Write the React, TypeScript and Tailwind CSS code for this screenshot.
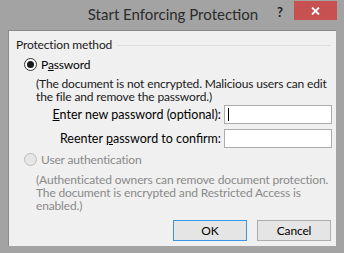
const font = { fontFamily: 'Lato, "Liberation Sans", sans-serif' };

const Radio = ({ checked, disabled }: { checked?: boolean; disabled?: boolean }) => (
  <div
    className={`w-[13px] h-[13px] rounded-full border flex items-center justify-center shrink-0 ${
      disabled ? 'border-[#bcbcbc] bg-[#e6e6e6]' : 'border-[#333333] bg-white'
    }`}
  >
    {checked && <div className="w-[7px] h-[7px] rounded-full bg-[#1a1a1a]" />}
  </div>
);

export default function App() {
  return (
    <div className="w-[344px] h-[253px] bg-[#a3a3a3] flex flex-col text-[#000000] whitespace-nowrap" style={font}>
      {/* title bar */}
      <div className="relative h-[30px] shrink-0 flex items-center justify-center">
        <span className="text-[15px] leading-[18px] text-[#2b2b2b] pl-[2px] pb-[3px]">Start Enforcing Protection</span>
        <span className="absolute left-[277px] top-[5px] text-[13px] leading-[15px] font-bold text-[#1e1e1e]">?</span>
        <div className="absolute left-[294px] top-[1px] w-[43px] h-[19px] bg-[#c75050] flex items-center justify-center">
          <svg width="9" height="8" viewBox="0 0 9 8">
            <path d="M1 0.5 L8 7.5 M8 0.5 L1 7.5" stroke="white" strokeWidth="1.8" />
          </svg>
        </div>
      </div>

      {/* client area */}
      <div className="ml-[8px] w-[328px] h-[216px] bg-[#f0f0f0] border-l border-t border-[#8a8a8a] text-[12px] leading-[13px] tracking-[-0.15px] flex flex-col">
        <div className="flex items-center mt-[7px] ml-[7px] mr-[5px]">
          <span className="text-[#1a1a1a]">Protection method</span>
          <div className="flex-1 h-px bg-[#dcdcdc] ml-[5px] mt-[1px]" />
        </div>

        <div className="flex items-center mt-[7px] ml-[15px]">
          <Radio checked />
          <span className="ml-[4px]">
            P<span className="underline">a</span>ssword
          </span>
        </div>

        <div className="ml-[27px] mt-[6px] text-[#1a1a1a]">
          <div>(The document is not encrypted. Malicious users can edit</div>
          <div>the file and remove the password.)</div>
        </div>

        <div className="flex flex-col gap-[5px] mt-[2px] mr-[4px] text-[12.5px] tracking-normal">
          <div className="flex items-center justify-end">
            <span className="mr-[3px]">
              <span className="underline">E</span>nter new password (optional):
            </span>
            <div className="w-[108px] h-[19px] bg-white border border-[#acacac] flex items-center pl-[3px]">
              <div className="w-px h-[13px] bg-black" />
            </div>
          </div>
          <div className="flex items-center justify-end">
            <span className="mr-[3px]">
              Reenter <span className="underline">p</span>assword to confirm:
            </span>
            <div className="w-[108px] h-[19px] bg-white border border-[#acacac]" />
          </div>
        </div>

        <div className="flex items-center mt-[5px] ml-[15px] text-[#8a8a8a]">
          <Radio disabled />
          <span className="ml-[4px]">User authentication</span>
        </div>

        <div className="ml-[27px] mt-[7px] text-[#8a8a8a]">
          <div>(Authenticated owners can remove document protection.</div>
          <div>The document is encrypted and Restricted Access is</div>
          <div>enabled.)</div>
        </div>

        <div className="flex justify-end gap-[10px] mt-[8px] mr-[5px]">
          <button className="w-[74px] h-[21px] bg-[#e5e5e5] border border-[#3c96e6] text-[12px] leading-none">
            OK
          </button>
          <button className="w-[74px] h-[21px] bg-[#e5e5e5] border border-[#adadad] text-[12px] leading-none">
            Cancel
          </button>
        </div>
      </div>
    </div>
  );
}
